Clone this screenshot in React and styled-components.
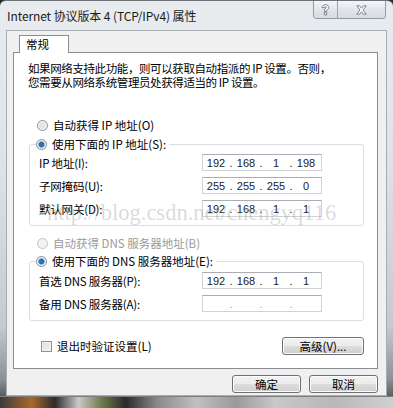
import React from 'react';
import styled, { createGlobalStyle } from 'styled-components';

const GlobalStyle = createGlobalStyle`
  html, body {
    margin: 0;
    padding: 0;
    background: #2a2a2a;
  }
`;

const FONT = `"Noto Sans CJK SC", "Liberation Sans", sans-serif`;

// Window frame
const Window = styled.div`
  position: relative;
  width: 393px;
  height: 408px;
  display: flex;
  flex-direction: column;
  box-sizing: border-box;
  border-top: 1px solid #6f7378;
  border-radius: 6px 6px 0 0;
  background: linear-gradient(180deg, #e9ecef 0%, #dfe3e7 40%, #c6cacf 80%, #8c8f93 93%, #3a3a3a 100%);
  overflow: hidden;
  font-family: ${FONT};
`;

const TitleBar = styled.div`
  height: 29px;
  display: flex;
  align-items: flex-start;
  flex-shrink: 0;
`;

const Title = styled.div`
  padding: 6px 0 0 7px;
  font-size: 12px;
  color: #1b1b1b;
  letter-spacing: -0.1px;
`;

const Captions = styled.div`
  margin-left: auto;
  margin-right: 7px;
  display: flex;
  border: 1px solid #8f9aa6;
  border-top: none;
  border-radius: 0 0 4px 4px;
  overflow: hidden;
`;

const CaptionButton = styled.div`
  width: ${p => p.$w}px;
  height: 17px;
  display: flex;
  align-items: center;
  justify-content: center;
  background: linear-gradient(180deg, #f4f6f8 0%, #e2e6ea 50%, #d6dbe0 100%);
  border-left: ${p => (p.$sep ? '1px solid #9aa4ae' : 'none')};
`;

const Client = styled.div`
  flex: 1;
  margin: 0 6px 0 6px;
  background: #f0f0f0;
  border: 1px solid #a7adb3;
  padding: 4px 8px 0 6px;
  display: flex;
  flex-direction: column;
`;

const TabStrip = styled.div`
  display: flex;
  padding-left: 6px;
`;

const Tab = styled.div`
  width: 42px;
  height: 17px;
  background: #fff;
  border: 1px solid #898c95;
  border-bottom: none;
  font-size: 11.5px;
  line-height: 17px;
  padding-left: 6px;
  box-sizing: content-box;
  margin-bottom: -1px;
  position: relative;
  z-index: 1;
  color: #000;
`;

const Panel = styled.div`
  position: relative;
  height: 317px;
  box-sizing: border-box;
  background: #fff;
  border: 1px solid #898c95;
  padding: 8px 13px 0 14px;
  display: flex;
  flex-direction: column;
  font-size: 11.5px;
  color: #000;
`;

const Intro = styled.div`
  line-height: 14px;
  letter-spacing: -0.4px;
`;

const OptionRow = styled.label`
  display: flex;
  align-items: center;
  gap: 5px;
  height: 14px;
  margin-top: ${p => p.$mt || 0}px;
  margin-left: ${p => p.$ml || 0}px;
  color: ${p => (p.$disabled ? '#9a9a9a' : '#000')};
  white-space: nowrap;
`;

const Radio = styled.span`
  width: 9px;
  height: 9px;
  border-radius: 50%;
  border: 1px solid ${p => (p.$disabled ? '#c4c4c4' : '#8a8f95')};
  background: ${p =>
    p.$checked
      ? 'radial-gradient(circle, #2f6fb0 0 2.5px, #7fb0dc 3px, #e8eef4 3.6px)'
      : p.$disabled
      ? '#f2f2f2'
      : 'radial-gradient(circle, #e3e6e9 0 3px, #f6f6f6 4px)'};
  flex-shrink: 0;
`;

const Group = styled.fieldset`
  margin: ${p => p.$mt || 0}px 0 0 1px;
  padding: ${p => p.$pt}px 41px ${p => p.$pb}px 6px;
  border: 1px solid #d5dfe5;
  border-radius: 3px;
  display: flex;
  flex-direction: column;
  gap: 6px;
  min-width: 0;
`;

const Legend = styled.legend`
  padding: 0 3px 0 0;
  margin: 0;
  font-size: 11.5px;
`;

const FieldRow = styled.div`
  display: flex;
  align-items: center;
  height: 17px;
  padding-left: 3px;
`;

const FieldLabel = styled.span`
  flex: 1;
  letter-spacing: -0.2px;
`;

const IpBox = styled.div`
  width: 116px;
  height: 15px;
  border: 1px solid #cfd3d8;
  border-top-color: #abadb3;
  display: flex;
  align-items: center;
  padding-left: 2px;
  font-family: "Liberation Sans", sans-serif;
  font-size: 11px;
  color: #222;
  background: #fff;
`;

const Octet = styled.span`
  width: 22px;
  text-align: center;
`;

const Dot = styled.span`
  width: 8px;
  text-align: center;
  color: ${p => (p.$empty ? '#9a9a9a' : '#222')};
`;

const Footer = styled.div`
  display: flex;
  align-items: center;
  justify-content: space-between;
  margin-top: 16px;
  padding-left: 13px;
`;

const Check = styled.span`
  width: 9px;
  height: 9px;
  border: 1px solid #8f8f8f;
  background: linear-gradient(135deg, #dcdcdc, #f4f4f4);
  box-shadow: inset 0 0 0 1px #f4f4f4;
  flex-shrink: 0;
`;

const Button = styled.button`
  width: ${p => p.$w}px;
  height: 18px;
  padding: 0;
  border: 1px solid #707070;
  border-radius: 3px;
  background: linear-gradient(180deg, #f2f2f2 0%, #ebebeb 50%, #dddddd 51%, #cfcfcf 100%);
  box-shadow: inset 0 0 0 1px #fcfcfc;
  font-family: ${FONT};
  font-size: 11.5px;
  line-height: 16px;
  color: #000;
`;

const ButtonRow = styled.div`
  display: flex;
  justify-content: flex-end;
  gap: 8px;
  margin-top: 6px;
`;

const BottomFrame = styled.div`
  height: 11px;
  flex-shrink: 0;
  border-top: 1px solid #7b7f84;
  background: linear-gradient(90deg, #3b3b3b 0%, #a86a2a 8%, #2c2c2c 14%, #c9c9c9 20%, #6c7a4a 26%, #2a2a2a 32%, #8a8a8a 40%, #c0c0c0 50%, #9a9a9a 60%, #c8c8c8 70%, #b8b8b8 85%, #d0d0d0 100%);
`;

const Watermark = styled.div`
  position: absolute;
  left: 33px;
  top: 147px;
  font-family: "Liberation Serif", serif;
  font-size: 22.5px;
  color: rgba(140, 140, 140, 0.32);
  white-space: nowrap;
  pointer-events: none;
`;

const HelpGlyph = () => (
  <svg width="9" height="12" viewBox="0 0 9 12">
    <path
      d="M1.2 3.6 C1.2 1.6 2.6 0.8 4.5 0.8 C6.6 0.8 7.8 1.9 7.8 3.4 C7.8 4.8 6.6 5.4 5.7 6 L5.7 7.4 L3.3 7.4 L3.3 5.3 C4.2 4.7 5.3 4.3 5.3 3.5 C5.3 3 5 2.7 4.5 2.7 C3.9 2.7 3.6 3.1 3.6 3.6 Z M3.3 8.6 L5.7 8.6 L5.7 10.9 L3.3 10.9 Z"
      fill="#fff"
      stroke="#6d7680"
      strokeWidth="0.9"
      strokeLinejoin="round"
    />
  </svg>
);

const CloseGlyph = () => (
  <svg width="11" height="10" viewBox="0 0 11 10">
    <path
      d="M0.8 0.8 L3.6 0.8 L5.5 3.2 L7.4 0.8 L10.2 0.8 L7 5 L10.2 9.2 L7.4 9.2 L5.5 6.8 L3.6 9.2 L0.8 9.2 L4 5 Z"
      fill="#fff"
      stroke="#6d7680"
      strokeWidth="0.9"
      strokeLinejoin="round"
    />
  </svg>
);

const IpField = ({ parts }) => (
  <IpBox>
    {[0, 1, 2, 3].map(i => (
      <React.Fragment key={i}>
        <Octet>{parts ? parts[i] : ''}</Octet>
        {i < 3 && <Dot $empty={!parts}>.</Dot>}
      </React.Fragment>
    ))}
  </IpBox>
);

const ipRows = [
  { label: 'IP 地址(I):', parts: ['192', '168', '1', '198'] },
  { label: '子网掩码(U):', parts: ['255', '255', '255', '0'] },
  { label: '默认网关(D):', parts: ['192', '168', '1', '1'] },
];

const dnsRows = [
  { label: '首选 DNS 服务器(P):', parts: ['192', '168', '1', '1'] },
  { label: '备用 DNS 服务器(A):', parts: null },
];

export default function App() {
  return (
    <>
      <GlobalStyle />
      <Window>
        <TitleBar>
          <Title>Internet 协议版本 4 (TCP/IPv4) 属性</Title>
          <Captions>
            <CaptionButton $w={23}>
              <HelpGlyph />
            </CaptionButton>
            <CaptionButton $w={47} $sep>
              <CloseGlyph />
            </CaptionButton>
          </Captions>
        </TitleBar>

        <Client>
          <TabStrip>
            <Tab>常规</Tab>
          </TabStrip>
          <Panel>
            <Intro>
              如果网络支持此功能，则可以获取自动指派的 IP 设置。否则，
              <br />
              您需要从网络系统管理员处获得适当的 IP 设置。
            </Intro>

            <OptionRow $mt={29} $ml={9}>
              <Radio />
              自动获得 IP 地址(O)
            </OptionRow>

            <Group $mt={5} $pt={3} $pb={8}>
              <Legend>
                <OptionRow>
                  <Radio $checked />
                  使用下面的 IP 地址(S):
                </OptionRow>
              </Legend>
              {ipRows.map(r => (
                <FieldRow key={r.label}>
                  <FieldLabel>{r.label}</FieldLabel>
                  <IpField parts={r.parts} />
                </FieldRow>
              ))}
            </Group>

            <OptionRow $mt={10} $ml={9} $disabled>
              <Radio $disabled />
              自动获得 DNS 服务器地址(B)
            </OptionRow>

            <Group $mt={4} $pt={4} $pb={8}>
              <Legend>
                <OptionRow>
                  <Radio $checked />
                  使用下面的 DNS 服务器地址(E):
                </OptionRow>
              </Legend>
              {dnsRows.map(r => (
                <FieldRow key={r.label}>
                  <FieldLabel>{r.label}</FieldLabel>
                  <IpField parts={r.parts} />
                </FieldRow>
              ))}
            </Group>

            <Footer>
              <OptionRow>
                <Check />
                退出时验证设置(L)
              </OptionRow>
              <Button $w={82}>高级(V)...</Button>
            </Footer>

            <Watermark>http://blog.csdn.net/chengyq116</Watermark>
          </Panel>

          <ButtonRow>
            <Button $w={69}>确定</Button>
            <Button $w={69}>取消</Button>
          </ButtonRow>
        </Client>
        <BottomFrame />
      </Window>
    </>
  );
}
